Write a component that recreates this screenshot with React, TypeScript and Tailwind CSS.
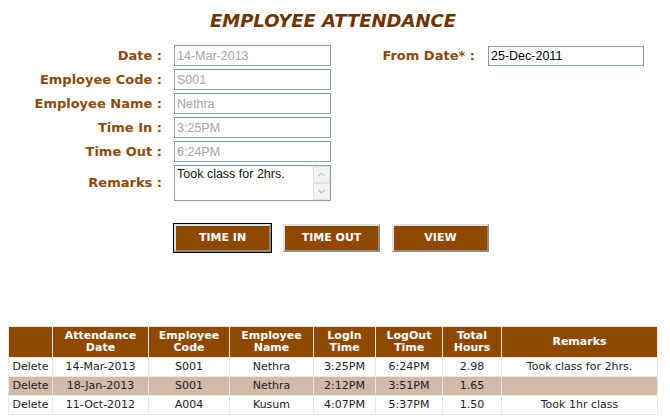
import { ChevronUp, ChevronDown } from "lucide-react"

type Row = {
  date: string
  code: string
  name: string
  login: string
  logout: string
  hours: string
  remarks: string
}

const rows: Row[] = [
  { date: "14-Mar-2013", code: "S001", name: "Nethra", login: "3:25PM", logout: "6:24PM", hours: "2.98", remarks: "Took class for 2hrs." },
  { date: "18-Jan-2013", code: "S001", name: "Nethra", login: "2:12PM", logout: "3:51PM", hours: "1.65", remarks: "" },
  { date: "11-Oct-2012", code: "A004", name: "Kusum", login: "4:07PM", logout: "5:37PM", hours: "1.50", remarks: "Took 1hr class" },
]

const fields = [
  { label: "Date :", value: "14-Mar-2013" },
  { label: "Employee Code :", value: "S001" },
  { label: "Employee Name :", value: "Nethra" },
  { label: "Time In :", value: "3:25PM" },
  { label: "Time Out :", value: "6:24PM" },
]

const headers = [
  { text: ["", ""], w: "w-[44px]" },
  { text: ["Attendance", "Date"], w: "w-[96px]" },
  { text: ["Employee", "Code"], w: "w-[81px]" },
  { text: ["Employee", "Name"], w: "w-[84px]" },
  { text: ["LogIn", "Time"], w: "w-[62px]" },
  { text: ["LogOut", "Time"], w: "w-[67px]" },
  { text: ["Total", "Hours"], w: "w-[59px]" },
  { text: ["Remarks"], w: "w-[156px]" },
]

function ActionButton({ label, focused }: { label: string; focused?: boolean }) {
  return (
    <div className={focused ? "border border-black" : "border border-transparent"}>
      <button
        type="button"
        className="flex h-[28px] w-[97px] items-center justify-center border-2 border-t-[#e4e0d8] border-l-[#e4e0d8] border-b-[#8c8a84] border-r-[#8c8a84] bg-[#8f4800] text-[11px] font-bold text-white"
      >
        {label}
      </button>
    </div>
  )
}

export default function App() {
  return (
    <div className="h-[417px] w-[670px] overflow-hidden bg-white font-['DejaVu_Sans',Verdana,sans-serif]">
      <h1 className="pr-[4px] pt-[10px] text-center text-[18px] font-bold italic leading-[22px] text-[#6e3400]">
        EMPLOYEE ATTENDANCE
      </h1>

      <div className="mt-[13px] flex">
        <div className="grid grid-cols-[162px_157px] items-center gap-x-[12px] gap-y-[3px]">
          {fields.map((f) => (
            <div key={f.label} className="contents">
              <label className="text-right text-[13px] font-bold text-[#8b4a0c]">{f.label}</label>
              <input
                disabled
                value={f.value}
                readOnly
                className="h-[21px] w-[157px] border border-[#7f9db9] bg-white px-[2px] font-['Liberation_Sans',Arial,sans-serif] text-[12.5px] text-[#a3a3a3]"
              />
            </div>
          ))}
          <label className="text-right text-[13px] font-bold text-[#8b4a0c]">Remarks :</label>
          <div className="flex h-[36px] w-[157px] border border-[#7f9db9] bg-white">
            <textarea
              readOnly
              value="Took class for 2hrs."
              className="h-full flex-1 resize-none overflow-hidden px-[2px] pt-px font-['Liberation_Sans',Arial,sans-serif] text-[12.5px] leading-[15px] text-[#111] outline-none"
            />
            <div className="flex w-[17px] flex-col bg-[#f7f7f2]">
              <div className="flex h-[17px] items-center justify-center border border-[#e2e1da] bg-[#f3f3ee]">
                <ChevronUp className="size-[11px] text-[#c4c4bc]" strokeWidth={3} />
              </div>
              <div className="flex h-[17px] items-center justify-center border border-[#e2e1da] bg-[#f3f3ee]">
                <ChevronDown className="size-[11px] text-[#c4c4bc]" strokeWidth={3} />
              </div>
            </div>
          </div>
        </div>

        <div className="flex h-[21px] items-center">
          <label className="w-[144px] text-right text-[13px] font-bold text-[#8b4a0c]">From Date* :</label>
          <input
            value="25-Dec-2011"
            readOnly
            className="ml-[13px] h-[20px] w-[156px] border border-[#7f9db9] bg-white px-[2px] font-['Liberation_Sans',Arial,sans-serif] text-[12.5px] text-black"
          />
        </div>
      </div>

      <div className="ml-[173px] mt-[22px] flex gap-[10px]">
        <ActionButton label="TIME IN" focused />
        <ActionButton label="TIME OUT" />
        <ActionButton label="VIEW" />
      </div>

      <table className="ml-[8px] mt-[73px] w-[650px] table-fixed border-collapse border border-[#e6e0f0] text-[11px]">
        <thead>
          <tr className="h-[31px] bg-[#8f4800] text-white">
            {headers.map((h, i) => (
              <th key={i} className={`${h.w} border border-[#efe6dc] px-1 text-center font-bold leading-[12px]`}>
                {h.text.map((t, j) => (
                  <div key={j}>{t}</div>
                ))}
              </th>
            ))}
          </tr>
        </thead>
        <tbody>
          {rows.map((r, i) => (
            <tr key={i} className={`h-[19px] ${i === 1 ? "bg-[#d3b9aa]" : "bg-white"} text-[#1b1b2a]`}>
              <td className="border border-[#efe6dc] text-center">Delete</td>
              <td className="border border-[#efe6dc] text-center">{r.date}</td>
              <td className="border border-[#efe6dc] text-center">{r.code}</td>
              <td className="border border-[#efe6dc] text-center">{r.name}</td>
              <td className="border border-[#efe6dc] text-center">{r.login}</td>
              <td className="border border-[#efe6dc] text-center">{r.logout}</td>
              <td className="border border-[#efe6dc] text-center">{r.hours}</td>
              <td className="border border-[#efe6dc] text-center">{r.remarks}</td>
            </tr>
          ))}
        </tbody>
      </table>
    </div>
  )
}
